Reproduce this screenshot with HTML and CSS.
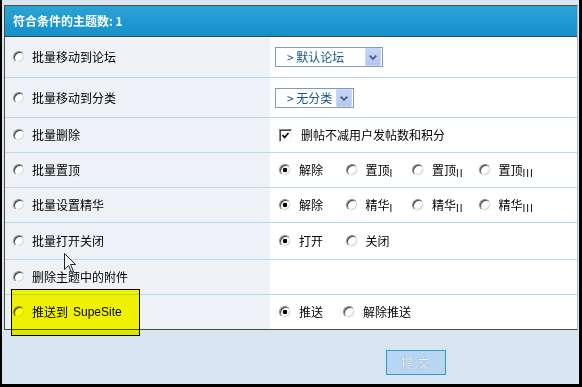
FILE: index.html
```html
<!DOCTYPE html>
<html lang="zh-CN">
<head>
    <meta charset="utf-8">
    <title>主题管理</title>
    <link rel="stylesheet" href="styles.css">
</head>
<body>
    <div class="frame">
        <form class="panel">
            <div class="panel-head">符合条件的主题数: 1</div>

            <div class="row row-select">
                <label class="cell-label"><input type="radio" name="operation" class="radio">批量移动到论坛</label>
                <div class="cell-value">
                    <div class="select select-forum">
                        <span class="select-text">&gt; 默认论坛</span>
                        <span class="select-btn"><svg width="15" height="16" viewBox="0 0 15 16"><path d="M4 6.5 L7.5 10 L11 6.5" fill="none" stroke="#4a5f86" stroke-width="2"/></svg></span>
                    </div>
                </div>
            </div>

            <div class="row row-select2">
                <label class="cell-label"><input type="radio" name="operation" class="radio">批量移动到分类</label>
                <div class="cell-value">
                    <div class="select select-type">
                        <span class="select-text">&gt; 无分类</span>
                        <span class="select-btn"><svg width="15" height="16" viewBox="0 0 15 16"><path d="M4 6.5 L7.5 10 L11 6.5" fill="none" stroke="#4a5f86" stroke-width="2"/></svg></span>
                    </div>
                </div>
            </div>

            <div class="row">
                <label class="cell-label"><input type="radio" name="operation" class="radio">批量删除</label>
                <div class="cell-value">
                    <label class="opt-check">
                        <span class="check"><svg width="11" height="11" viewBox="0 0 11 11"><path d="M2.5 5 L4.5 7.5 L8.5 3" fill="none" stroke="#000" stroke-width="1.7"/></svg></span>删帖不减用户发帖数和积分
                    </label>
                </div>
            </div>

            <div class="row">
                <label class="cell-label"><input type="radio" name="operation" class="radio">批量置顶</label>
                <div class="cell-value">
                    <label class="opt"><input type="radio" name="sticky" class="radio" checked><span>解除</span></label>
                    <label class="opt"><input type="radio" name="sticky" class="radio"><span>置顶<sub>I</sub></span></label>
                    <label class="opt"><input type="radio" name="sticky" class="radio"><span>置顶<sub>II</sub></span></label>
                    <label class="opt"><input type="radio" name="sticky" class="radio"><span>置顶<sub>III</sub></span></label>
                </div>
            </div>

            <div class="row">
                <label class="cell-label"><input type="radio" name="operation" class="radio">批量设置精华</label>
                <div class="cell-value">
                    <label class="opt"><input type="radio" name="digest" class="radio" checked><span>解除</span></label>
                    <label class="opt"><input type="radio" name="digest" class="radio"><span>精华<sub>I</sub></span></label>
                    <label class="opt"><input type="radio" name="digest" class="radio"><span>精华<sub>II</sub></span></label>
                    <label class="opt"><input type="radio" name="digest" class="radio"><span>精华<sub>III</sub></span></label>
                </div>
            </div>

            <div class="row row-tall">
                <label class="cell-label"><input type="radio" name="operation" class="radio">批量打开关闭</label>
                <div class="cell-value">
                    <label class="opt"><input type="radio" name="close" class="radio" checked>打开</label>
                    <label class="opt"><input type="radio" name="close" class="radio">关闭</label>
                </div>
            </div>

            <div class="row">
                <label class="cell-label"><input type="radio" name="operation" class="radio">删除主题中的附件</label>
                <div class="cell-value"></div>
            </div>

            <div class="row row-last">
                <label class="cell-label"><input type="radio" name="operation" class="radio">推送到 <span class="latin">SupeSite</span></label>
                <div class="cell-value">
                    <label class="opt opt-push"><input type="radio" name="push" class="radio" checked>推送</label>
                    <label class="opt"><input type="radio" name="push" class="radio">解除推送</label>
                </div>
            </div>
        </form>

        <div class="footer">
            <button class="submit" type="button">提 交</button>
        </div>

        <div class="highlight"></div>
        <svg class="cursor" width="13" height="21" viewBox="0 0 13 21">
            <path d="M0.5 0.5 L0.5 16.5 L4.5 12.5 L7.5 19.5 L9.5 18.5 L6.5 11.5 L11.5 11.5 Z" fill="#fff" fill-opacity="0.6" stroke="#222" stroke-width="1"/>
        </svg>
    </div>
</body>
</html>
```

FILE: styles.css
```css
* {
    box-sizing: border-box;
}

body {
    margin: 0;
    background-color: #dae5f2;
    font-family: "Noto Sans CJK SC", sans-serif;
    font-size: 12px;
    color: #000;
}

.frame {
    position: relative;
    width: 582px;
    height: 387px;
    padding: 5px 0 0 2px;
    background-color: #dae5f2;
    border-left: 2px solid #000;
    border-right: 3px solid #000;
    border-bottom: 3px solid #000;
}

.panel {
    width: 574px;
    margin: 0;
    background-color: #fff;
    border-top: 1px solid #5b5339;
    border-left: 1px solid #4c4c3c;
    border-right: 1px solid #aab6c2;
    border-bottom: 1px solid #4c4c3c;
}

.panel-head {
    height: 31px;
    padding-left: 8px;
    line-height: 30px;
    color: #fff;
    font-weight: bold;
    background: linear-gradient(#2aa3d7, #1590c9);
    border-bottom: 1px solid #3f4a38;
}

.row {
    display: flex;
    height: 35px;
    border-bottom: 1px solid #b9d8ec;
}

.row-select {
    height: 41px;
}

.row-select2 {
    height: 40px;
}

.row-tall {
    height: 37px;
}

.row-last {
    height: 34px;
    border-bottom: none;
}

.cell-label {
    display: flex;
    align-items: center;
    width: 265px;
    padding-left: 8px;
    background-color: #eef2f6;
    line-height: 1;
}

.cell-label .radio {
    margin-right: 7px;
}

.cell-value {
    display: flex;
    align-items: center;
    flex: 1;
    padding-left: 9px;
    line-height: 1;
}

.latin {
    margin-left: 5px;
    font-family: "Liberation Sans", sans-serif;
}

/* classic 3d radio */
.radio {
    appearance: none;
    -webkit-appearance: none;
    flex: none;
    width: 12px;
    height: 12px;
    margin: 0;
    border-radius: 50%;
    border: 1px solid;
    border-color: #8a8a8a #f4f4f4 #f4f4f4 #8a8a8a;
    background-color: #fff;
    box-shadow: inset 1px 1px 0 #404040, inset -1px -1px 0 #d8d4cc;
}

.radio:checked {
    background: radial-gradient(circle, #000 0 2px, #fff 2.6px);
}

.opt {
    display: flex;
    align-items: center;
    width: 66.5px;
    flex: none;
    white-space: nowrap;
}

.opt:last-child {
    width: auto;
}

.opt .radio {
    margin-right: 8px;
}

.opt-push {
    width: 64px;
}

.opt sub {
    font-family: "Liberation Sans", sans-serif;
    font-size: 10px;
    line-height: 0;
    vertical-align: -2px;
    letter-spacing: 1px;
}

.opt-check {
    display: flex;
    align-items: center;
}

.check {
    display: inline-flex;
    align-items: center;
    justify-content: center;
    width: 13px;
    height: 13px;
    margin-right: 9px;
    border: 1px solid;
    border-color: #8a8a8a #f4f4f4 #f4f4f4 #8a8a8a;
    background-color: #fff;
    box-shadow: inset 1px 1px 0 #404040;
}

.select {
    display: flex;
    align-items: center;
    height: 20px;
    margin-left: -4px;
    border: 1px solid #7f9db9;
    background-color: #fff;
    color: #16578c;
}

.select-forum {
    width: 108px;
}

.select-type {
    width: 79px;
}

.select-text {
    flex: 1;
    padding-left: 11px;
}

.select-btn {
    display: flex;
    width: 16px;
    height: 18px;
    margin-right: 1px;
    align-items: center;
    justify-content: center;
    background: linear-gradient(#c6d6f8, #b2c6f2);
    border: 1px solid #c9d7f4;
    border-radius: 1px;
}

.footer {
    height: 56px;
    padding: 20px 0 0 382px;
}

.submit {
    width: 60px;
    height: 25px;
    padding: 0;
    font-family: "Noto Sans CJK SC", sans-serif;
    font-size: 12px;
    color: #edf3f9;
    text-shadow: 0 0 1px #6f7e8c;
    letter-spacing: 1px;
    background-color: #b6d6f4;
    border: 1px solid #2c9dd1;
}

.highlight {
    position: absolute;
    left: 9px;
    top: 289px;
    width: 129px;
    height: 47px;
    border: 1px solid #000;
    background-color: #ffff00;
    mix-blend-mode: multiply;
}

.cursor {
    position: absolute;
    left: 62px;
    top: 253px;
}
```
